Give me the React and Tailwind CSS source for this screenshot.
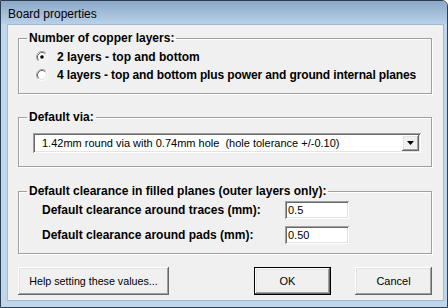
import React from "react";

const raised =
  "shadow-[inset_-1px_-1px_0_#696969,inset_1px_1px_0_#fff,inset_-2px_-2px_0_#a0a0a0,inset_2px_2px_0_#e3e3e3] bg-[#f0f0f0]";
const sunken =
  "shadow-[inset_1px_1px_0_#a0a0a0,inset_-1px_-1px_0_#fff,inset_2px_2px_0_#696969,inset_-2px_-2px_0_#e3e3e3] bg-white";

function Radio({ checked }) {
  return (
    <svg width="12" height="12" viewBox="0 0 12 12" className="shrink-0">
      <circle cx="6" cy="6" r="4.5" fill="#fff" />
      <path d="M2.11 9.89 A5.5 5.5 0 0 1 9.89 2.11" fill="none" stroke="#a0a0a0" />
      <path d="M9.89 2.11 A5.5 5.5 0 0 1 2.11 9.89" fill="none" stroke="#fff" />
      <path d="M2.82 9.18 A4.5 4.5 0 0 1 9.18 2.82" fill="none" stroke="#696969" />
      <path d="M9.18 2.82 A4.5 4.5 0 0 1 2.82 9.18" fill="none" stroke="#e3e3e3" />
      {checked ? <circle cx="6" cy="6" r="1.8" fill="#000" /> : null}
    </svg>
  );
}

function Group({ title, height, children }) {
  return (
    <fieldset
      className={`ml-[10px] w-[414px] ${height} border border-[#a0a0a0] px-[8px] shadow-[1px_1px_0_#fff,inset_1px_1px_0_#fff]`}
    >
      <legend className="px-[2px] text-[12px] font-bold leading-[13px] text-black">{title}</legend>
      {children}
    </fieldset>
  );
}

export default function App() {
  return (
    <div className="h-[308px] w-[448px] overflow-hidden bg-white font-['Liberation_Sans',Arial,sans-serif] text-black">
      <div className="flex h-full flex-col rounded-tr-[6px] border border-[#2c3f52] bg-[#c0d6ed]">
        <div className="flex h-[23px] items-center rounded-tr-[6px] bg-gradient-to-b from-[#8ba8c6] to-[#b9d0e9] pl-[7px] pt-[3px] text-[12px]">
          Board properties
        </div>

        <div className="mb-[6px] ml-[6px] mr-[3px] flex flex-1 flex-col border border-[#a3b9d2] bg-[#f0f0f0] pt-[7px]">
          <Group title="Number of copper layers:" height="h-[62px]">
            <div className="mt-[3px] flex flex-col whitespace-nowrap text-[12px] font-bold">
              <div className="flex h-[18px] items-center">
                <span className="ml-[9px]">
                  <Radio checked />
                </span>
                <span className="ml-[9px]">2 layers - top and bottom</span>
              </div>
              <div className="flex h-[18px] items-center">
                <span className="ml-[9px]">
                  <Radio />
                </span>
                <span className="ml-[9px] tracking-[-0.12px]">
                  4 layers - top and bottom plus power and ground internal planes
                </span>
              </div>
            </div>
          </Group>

          <div className="h-[17px]" />

          <Group title="Default via:" height="h-[56px]">
            <div className={`ml-[6px] mt-[9px] flex h-[20px] w-[388px] items-center p-[2px] ${sunken}`}>
              <span className="flex-1 whitespace-pre pl-[7px] text-[11px]">
                1.42mm round via with 0.74mm hole  (hole tolerance +/-0.10)
              </span>
              <span className={`flex h-[16px] w-[17px] items-center justify-center ${raised}`}>
                <svg width="7" height="4" viewBox="0 0 7 4">
                  <polygon points="0,0 7,0 3.5,4" fill="#000" />
                </svg>
              </span>
            </div>
          </Group>

          <div className="h-[18px]" />

          <Group title="Default clearance in filled planes (outer layers only):" height="h-[69px]">
            <div className="ml-[15px] mt-[3px] grid grid-cols-[243px_64px] gap-y-[7px] text-[12px]">
              <span className="flex h-[18px] items-center font-bold">Default clearance around traces (mm):</span>
              <span className={`flex h-[18px] items-center pl-[3px] text-[11px] ${sunken}`}>0.5</span>
              <span className="flex h-[18px] items-center font-bold">Default clearance around pads (mm):</span>
              <span className={`flex h-[18px] items-center pl-[3px] text-[11px] ${sunken}`}>0.50</span>
            </div>
          </Group>

          <div className="ml-[10px] mt-[13px] flex w-[414px] justify-between text-[11px]">
            <button type="button" className={`h-[28px] w-[151px] text-[10.7px] ${raised}`}>
              Help setting these values...
            </button>
            <div className="flex gap-[24px]">
              <button type="button" className={`h-[28px] w-[77px] border border-black pr-[10px] ${raised}`}>
                OK
              </button>
              <button type="button" className={`h-[28px] w-[77px] ${raised}`}>
                Cancel
              </button>
            </div>
          </div>
        </div>
      </div>
    </div>
  );
}
